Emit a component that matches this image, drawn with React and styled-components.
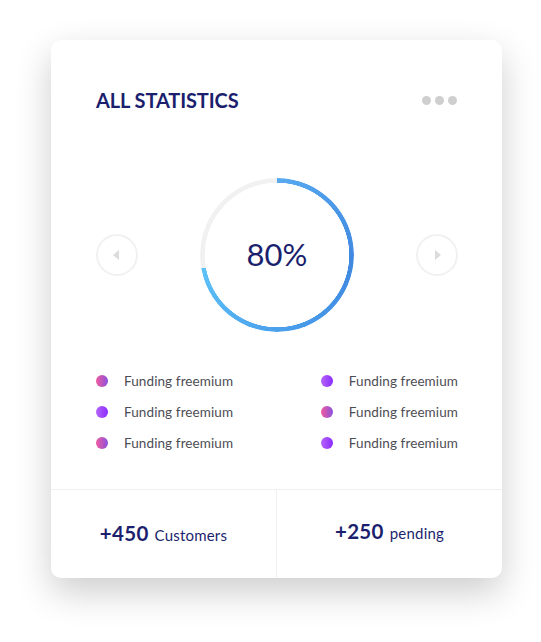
import React from 'react';
import styled, { createGlobalStyle } from 'styled-components';

const Global = createGlobalStyle`
  html, body {
    margin: 0;
    background: #fff;
    font-family: Lato, "Open Sans", sans-serif;
  }
`;

const Page = styled.div`
  padding: 40px 0 64px 51px;
`;

const Card = styled.div`
  width: 451px;
  height: 538px;
  background: #fff;
  border-radius: 10px;
  box-shadow: 0 14px 36px rgba(0, 0, 0, 0.2);
  display: flex;
  flex-direction: column;
  overflow: hidden;
`;

const Header = styled.div`
  display: flex;
  justify-content: space-between;
  align-items: center;
  padding: 50px 45px 0 45px;
  height: 20px;
`;

const Title = styled.h2`
  margin: 0;
  font-size: 20px;
  font-weight: 700;
  color: #1b1f6e;
  letter-spacing: -0.1px;
`;

const Dots = styled.div`
  display: flex;
  gap: 4px;
  span {
    width: 9px;
    height: 9px;
    border-radius: 50%;
    background: #cfcfcf;
  }
`;

const ChartWrap = styled.div`
  display: flex;
  align-items: center;
  justify-content: space-between;
  padding: 0 44px 0 45px;
  margin-top: 68px;
`;

const NavButton = styled.button`
  width: 42px;
  height: 42px;
  border-radius: 50%;
  border: 2px solid #f1f1f1;
  background: #fff;
  display: flex;
  align-items: center;
  justify-content: center;
  padding: 0;
  svg { display: block; }
`;

const Ring = styled.div`
  position: relative;
  width: 154px;
  height: 154px;
  border-radius: 50%;
  background: conic-gradient(
    #58aaf0 0deg,
    #3f88e0 95deg,
    #4ba0ec 180deg,
    #5ec2f7 260deg,
    #f1f1f1 260deg 360deg
  );
  -webkit-mask: radial-gradient(farthest-side, transparent calc(100% - 5px), #000 calc(100% - 4.5px));
  mask: radial-gradient(farthest-side, transparent calc(100% - 5px), #000 calc(100% - 4.5px));
`;

const RingBox = styled.div`
  position: relative;
  width: 154px;
  height: 154px;
`;

const Percent = styled.div`
  position: absolute;
  inset: 0;
  display: flex;
  align-items: center;
  justify-content: center;
  font-size: 31px;
  color: #1b1f6e;
  padding-bottom: 2px;
`;

const Legend = styled.div`
  display: grid;
  grid-template-columns: 1fr auto;
  row-gap: 13px;
  padding: 40px 44px 0 45px;
`;

const Item = styled.div`
  display: flex;
  align-items: center;
  gap: 16px;
  font-size: 13.5px;
  letter-spacing: 0.1px;
  color: #4d4d55;
  height: 18px;
`;

const Dot = styled.span`
  width: 12px;
  height: 12px;
  border-radius: 50%;
  background: ${p => p.pink
    ? 'linear-gradient(90deg, #f15a9e, #8a52dc)'
    : 'linear-gradient(90deg, #b565f7, #8b2cff)'};
`;

const Footer = styled.div`
  margin-top: auto;
  height: 88px;
  border-top: 1px solid #f0f0f2;
  display: grid;
  grid-template-columns: 225px 1fr;
`;

const Stat = styled.div`
  display: flex;
  align-items: baseline;
  justify-content: center;
  padding-top: ${p => p.up ? '29px' : '31px'};
  gap: 6px;
  color: #1b1f6e;
  & + & { border-left: 1px solid #f0f0f2; }
  b { font-size: 20.5px; font-weight: 700; letter-spacing: 0.3px; }
  span { font-size: 15px; letter-spacing: 0.2px; }
`;

const items = [
  [true, false],
  [false, true],
  [true, false],
];

export default function App() {
  return (
    <Page>
      <Global />
      <Card>
        <Header>
          <Title>ALL STATISTICS</Title>
          <Dots><span /><span /><span /></Dots>
        </Header>
        <ChartWrap>
          <NavButton>
            <svg width="8" height="10" viewBox="0 0 8 10"><path d="M6 0 L0 5 L6 10 Z" fill="#dcdcdc" /></svg>
          </NavButton>
          <RingBox>
            <Ring />
            <Percent>80%</Percent>
          </RingBox>
          <NavButton>
            <svg width="8" height="10" viewBox="0 0 8 10"><path d="M2 0 L8 5 L2 10 Z" fill="#dcdcdc" /></svg>
          </NavButton>
        </ChartWrap>
        <Legend>
          {items.map((row, i) => row.map((pink, j) => (
            <Item key={`${i}-${j}`}>
              <Dot pink={pink} />
              Funding freemium
            </Item>
          )))}
        </Legend>
        <Footer>
          <Stat><b>+450</b><span>Customers</span></Stat>
          <Stat up><b>+250</b><span>pending</span></Stat>
        </Footer>
      </Card>
    </Page>
  );
}
